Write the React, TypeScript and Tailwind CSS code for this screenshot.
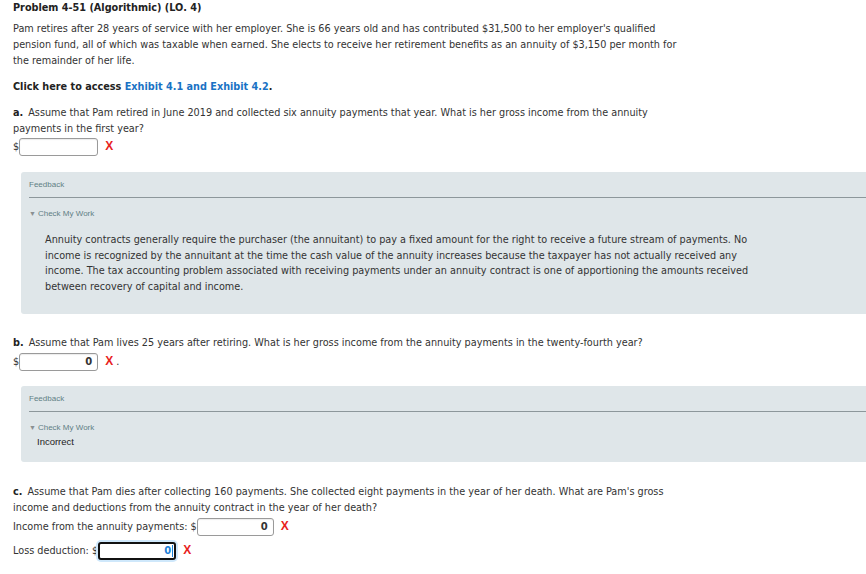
import React from 'react'

const body = "font-['DejaVu_Sans',Verdana,sans-serif] text-[9.7px] leading-[16px] text-[#333]"

function RedX() {
  return <span className="font-['Liberation_Sans',Arial,sans-serif] text-[12px] font-bold leading-none text-[#e8221c]">X</span>
}

function AnswerBox({ value = '', width = 'w-[79px]', focused = false }: { value?: string; width?: string; focused?: boolean }) {
  if (focused) {
    return (
      <span className={`inline-flex h-[18px] ${width} items-center justify-end rounded-[3px] border-2 border-[#111] bg-white pr-[1px] shadow-[0_0_0_2px_#cfe8fb]`}>
        <span className="text-[10px] font-bold text-[#1a7fd8]">{value}</span>
        <span className="ml-[1px] h-[12px] w-px bg-[#1a7fd8]" />
      </span>
    )
  }
  return (
    <span className={`inline-flex h-[18px] ${width} items-center justify-end rounded-[3px] border border-[#9a9a9a] bg-white pr-[5px] shadow-[inset_0_1px_1px_rgba(0,0,0,0.08)]`}>
      <span className="text-[10px] font-bold text-[#333]">{value}</span>
    </span>
  )
}

function Feedback({ children, tall }: { children: React.ReactNode; tall?: boolean }) {
  return (
    <div className={`ml-[8px] rounded-l-[3px] bg-[#dfe6e9] pl-[8px] ${tall ? 'h-[142px]' : 'h-[76px]'}`}>
      <div className="pt-[8px] font-['Liberation_Sans',Arial,sans-serif] text-[8px] leading-[10px] text-[#5f7f85]">Feedback</div>
      <div className="mt-[7px] h-px bg-[#8d979b]" />
      <div className="mt-[11px] flex items-center gap-[2px] font-['Liberation_Sans',Arial,sans-serif] text-[8px] leading-[10px] text-[#5f7f85]">
        <span className="text-[7px] text-[#8a8f92]">▼</span>
        <span>Check My Work</span>
      </div>
      {children}
    </div>
  )
}

export default function App() {
  return (
    <div className={`h-[574px] w-[866px] overflow-hidden bg-white pl-[13px] ${body}`}>
      <h1 className="text-[9.7px] font-bold leading-[15px] text-[#222]">Problem 4-51 (Algorithmic) (LO. 4)</h1>

      <p className="mt-[6px] w-[670px]">
        Pam retires after 28 years of service with her employer. She is 66 years old and has contributed $31,500 to her employer's qualified pension fund, all of which was taxable when earned. She elects to receive her retirement benefits as an annuity of $3,150 per month for the remainder of her life.
      </p>

      <p className="mt-[10px] font-bold text-[#222]">
        Click here to access <span className="text-[#1a72c4]">Exhibit 4.1 and Exhibit 4.2</span>.
      </p>

      <p className="mt-[10px] w-[670px]">
        <b className="mr-[5px] inline-block text-[#222]">a.</b>Assume that Pam retired in June 2019 and collected six annuity payments that year. What is her gross income from the annuity payments in the first year?
      </p>
      <div className="mt-[1px] flex h-[18px] items-center">
        <span>$</span>
        <AnswerBox />
        <span className="ml-[7px]"><RedX /></span>
      </div>

      <div className="mt-[16px]">
        <Feedback tall>
          <p className="ml-[16px] mt-[13px] w-[712px] leading-[15.7px]">
            Annuity contracts generally require the purchaser (the annuitant) to pay a fixed amount for the right to receive a future stream of payments. No income is recognized by the annuitant at the time the cash value of the annuity increases because the taxpayer has not actually received any income. The tax accounting problem associated with receiving payments under an annuity contract is one of apportioning the amounts received between recovery of capital and income.
          </p>
        </Feedback>
      </div>

      <p className="mt-[21px]">
        <b className="mr-[5px] inline-block text-[#222]">b.</b>Assume that Pam lives 25 years after retiring. What is her gross income from the annuity payments in the twenty-fourth year?
      </p>
      <div className="mt-[2px] flex h-[18px] items-center">
        <span>$</span>
        <AnswerBox value="0" />
        <span className="ml-[7px]"><RedX /></span>
        <span className="ml-[3px]">.</span>
      </div>

      <div className="mt-[15px]">
        <Feedback>
          <div className="ml-[8px] mt-[3px] font-['Liberation_Sans',Arial,sans-serif] text-[9.5px] leading-[12px] text-[#222]">Incorrect</div>
        </Feedback>
      </div>

      <p className="mt-[22px] w-[670px]">
        <b className="mr-[5px] inline-block text-[#222]">c.</b>Assume that Pam dies after collecting 160 payments. She collected eight payments in the year of her death. What are Pam's gross income and deductions from the annuity contract in the year of her death?
      </p>
      <div className="mt-[2px] flex h-[18px] items-center">
        <span>Income from the annuity payments: $</span>
        <AnswerBox value="0" width="w-[77px]" />
        <span className="ml-[7px]"><RedX /></span>
      </div>
      <div className="mt-[6px] flex h-[18px] items-center">
        <span>Loss deduction: $</span>
        <AnswerBox value="0" width="w-[78px]" focused />
        <span className="ml-[7px]"><RedX /></span>
      </div>
    </div>
  )
}
